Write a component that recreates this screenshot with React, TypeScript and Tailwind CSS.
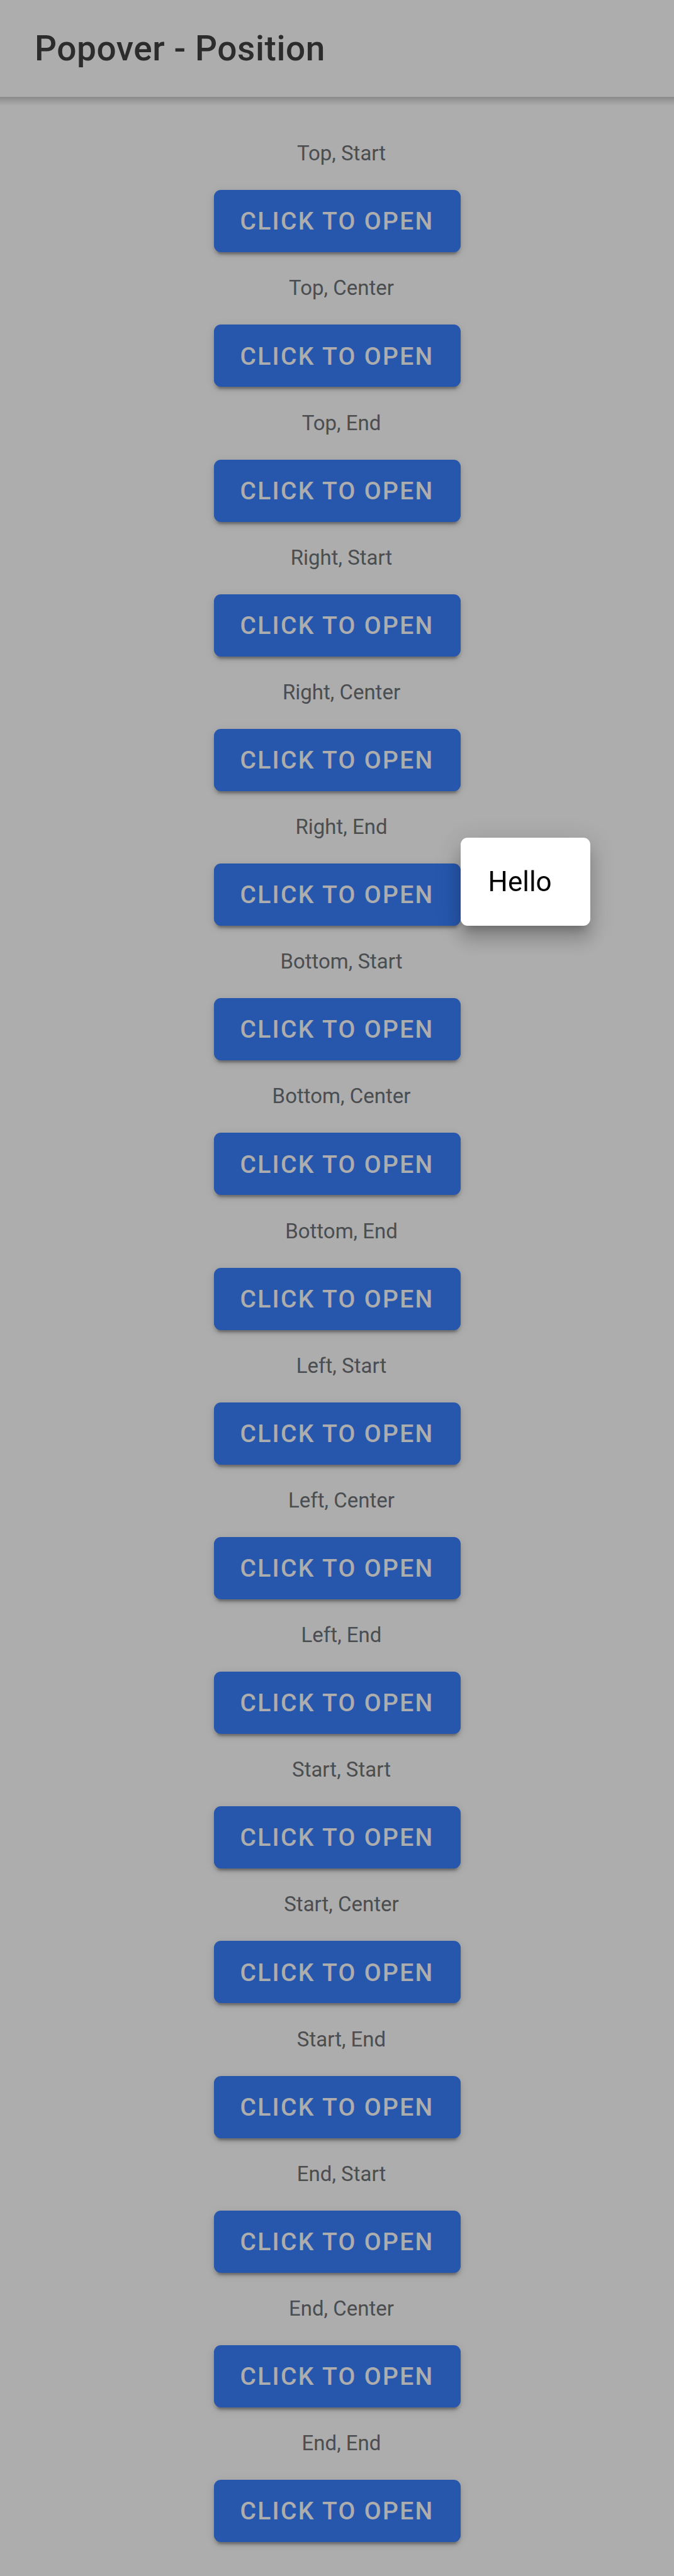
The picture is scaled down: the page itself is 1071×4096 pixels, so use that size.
import { useState } from "react";

const positions = [
  "Top, Start",
  "Top, Center",
  "Top, End",
  "Right, Start",
  "Right, Center",
  "Right, End",
  "Bottom, Start",
  "Bottom, Center",
  "Bottom, End",
  "Left, Start",
  "Left, Center",
  "Left, End",
  "Start, Start",
  "Start, Center",
  "Start, End",
  "End, Start",
  "End, Center",
  "End, End",
];

function Popover() {
  return (
    <div
      role="dialog"
      aria-label="Popover"
      className="absolute bottom-0 left-full z-20 w-[206px] rounded-[11px] bg-white p-[44px] text-[44px] leading-[52px] text-black shadow-[0_14px_14px_-8px_rgba(0,0,0,0.2),0_22px_27px_3px_rgba(0,0,0,0.14),0_8px_38px_5px_rgba(0,0,0,0.12)]"
    >
      Hello
    </div>
  );
}

type TriggerProps = { label: string; open: boolean; onOpen: () => void };

function Trigger({ label, open, onOpen }: TriggerProps) {
  const id = label.toLowerCase().replace(", ", "-");
  return (
    <section className="flex flex-1 flex-col items-center justify-end">
      <h2 id={id} className="mb-[38px] pl-[14px] text-[33px] leading-[40px] font-normal text-[#6f7378]">
        {label}
      </h2>
      <div className="relative">
        <button
          type="button"
          aria-describedby={id}
          aria-haspopup="dialog"
          onClick={onOpen}
          className="block h-[99px] w-[392px] rounded-[11px] bg-[#3880ff] pt-[2px] text-[39px] font-medium tracking-[0.06em] text-white uppercase shadow-[0_8px_3px_-5px_rgba(0,0,0,0.2),0_5px_5px_0_rgba(0,0,0,0.14),0_3px_14px_0_rgba(0,0,0,0.12)]"
        >
          Click to open
        </button>
        {open && <Popover />}
      </div>
    </section>
  );
}

export default function App() {
  const [active, setActive] = useState<string | null>("Right, End");

  return (
    <div className="flex min-h-screen flex-col bg-white font-[Roboto,sans-serif]">
      <header className="relative flex h-[154px] items-center bg-white px-[55px]">
        <h1 className="text-[55px] leading-[64px] font-medium tracking-[0.01em] text-[#424242]">
          Popover - Position
        </h1>
        <div className="absolute inset-x-0 top-full h-[14px] bg-linear-to-b from-black/20 to-transparent" />
      </header>
      <main className="flex flex-1 flex-col pt-[33px] pb-[54px]">
        {positions.map((label) => (
          <Trigger
            key={label}
            label={label}
            open={active === label}
            onOpen={() => setActive(label)}
          />
        ))}
      </main>
      {active && (
        <div className="fixed inset-0 z-10 bg-black/32" onClick={() => setActive(null)} />
      )}
    </div>
  );
}
